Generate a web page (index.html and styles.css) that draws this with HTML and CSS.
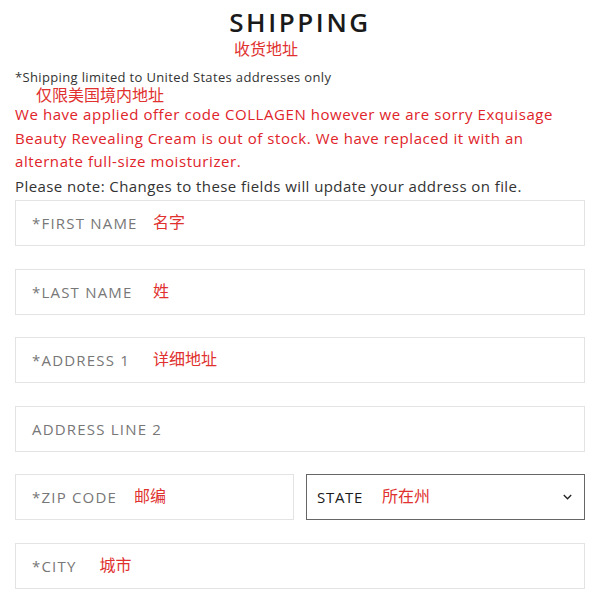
FILE: index.html
```html
<!DOCTYPE html>
<html>
<head>
<meta charset="utf-8">
<link rel="stylesheet" href="styles.css">
</head>
<body>
<div class="page">
  <h1 class="title">SHIPPING</h1>
  <div class="note-cn title-cn">收货地址</div>
  <p class="limit">*Shipping limited to United States addresses only</p>
  <div class="note-cn limit-cn">仅限美国境内地址</div>
  <p class="alert">We have applied offer code COLLAGEN however we are sorry Exquisage Beauty Revealing Cream is out of stock. We have replaced it with an alternate full-size moisturizer.</p>
  <p class="please">Please note: Changes to these fields will update your address on file.</p>
  <div class="fields">
    <div class="field"><span class="label wide">*FIRST NAME</span><span class="cn">名字</span></div>
    <div class="field"><span class="label wide">*LAST NAME</span><span class="cn">姓</span></div>
    <div class="field"><span class="label wide">*ADDRESS 1</span><span class="cn">详细地址</span></div>
    <div class="field"><span class="label">ADDRESS LINE 2</span></div>
    <div class="row">
      <div class="field zip"><span class="label">*ZIP CODE</span><span class="cn">邮编</span></div>
      <div class="field select"><span class="label dark">STATE</span><span class="cn">所在州</span>
        <svg class="chev" width="9" height="6" viewBox="0 0 9 6"><path d="M0.8 1 L4.5 4.8 L8.2 1" fill="none" stroke="#222" stroke-width="1.3"/></svg>
      </div>
    </div>
    <div class="field city"><span class="label">*CITY</span><span class="cn">城市</span></div>
  </div>
</div>
</body>
</html>
```
FILE: styles.css
```css
html, body { margin: 0; padding: 0; background: #fff; }
body { font-family: "Open Sans", "Noto Sans CJK SC", sans-serif; color: #333; }
.page { padding: 0 15px; }
.title {
  margin: 0; padding-top: 7px;
  text-align: center;
  font-family: "Open Sans", sans-serif;
  font-weight: 600;
  font-size: 26px;
  line-height: 30px;
  letter-spacing: 2.6px;
  color: #1a1a1a;
}
.note-cn {
  font-family: "Noto Sans CJK SC", sans-serif;
  color: #e0312f;
  font-size: 16px;
  line-height: 20px;
}
.title-cn { padding-left: 219px; padding-top: 1px; }
.limit {
  margin: 12px 0 0;
  font-size: 13px;
  line-height: 15px;
  letter-spacing: 0.35px;
  color: #333;
}
.limit-cn { padding-left: 21px; line-height: 18px; }
.alert {
  margin: 0;
  color: #e0242a;
  font-size: 15px;
  line-height: 23.7px;
  letter-spacing: 0.57px;
}
.please {
  margin: 0;
  font-size: 15px;
  line-height: 24px;
  letter-spacing: 0.42px;
  color: #333;
}
.fields { display: flex; flex-direction: column; gap: 22.6px; margin-top: 2px; }
.row { display: grid; grid-template-columns: 1fr 1fr; gap: 12px; }
.field {
  box-sizing: border-box;
  height: 46px;
  border: 1px solid #e3e3e3;
  display: flex;
  align-items: center;
  padding: 0 16px;
  gap: 15px;
  min-width: 0;
}
.label {
  font-size: 15px;
  color: #777;
  letter-spacing: 1.2px;
}
.label.wide { min-width: 106px; }
.label.dark { color: #1a1a1a; letter-spacing: 0.7px; }
.zip { gap: 17px; }
.city { gap: 23px; }
.cn {
  font-family: "Noto Sans CJK SC", sans-serif;
  font-size: 16px;
  color: #e0312f;
  position: relative; top: -2px;
}
.select { border-color: #666; padding-left: 10px; padding-right: 12px; gap: 19px; }
.chev { margin-left: auto; }
```
